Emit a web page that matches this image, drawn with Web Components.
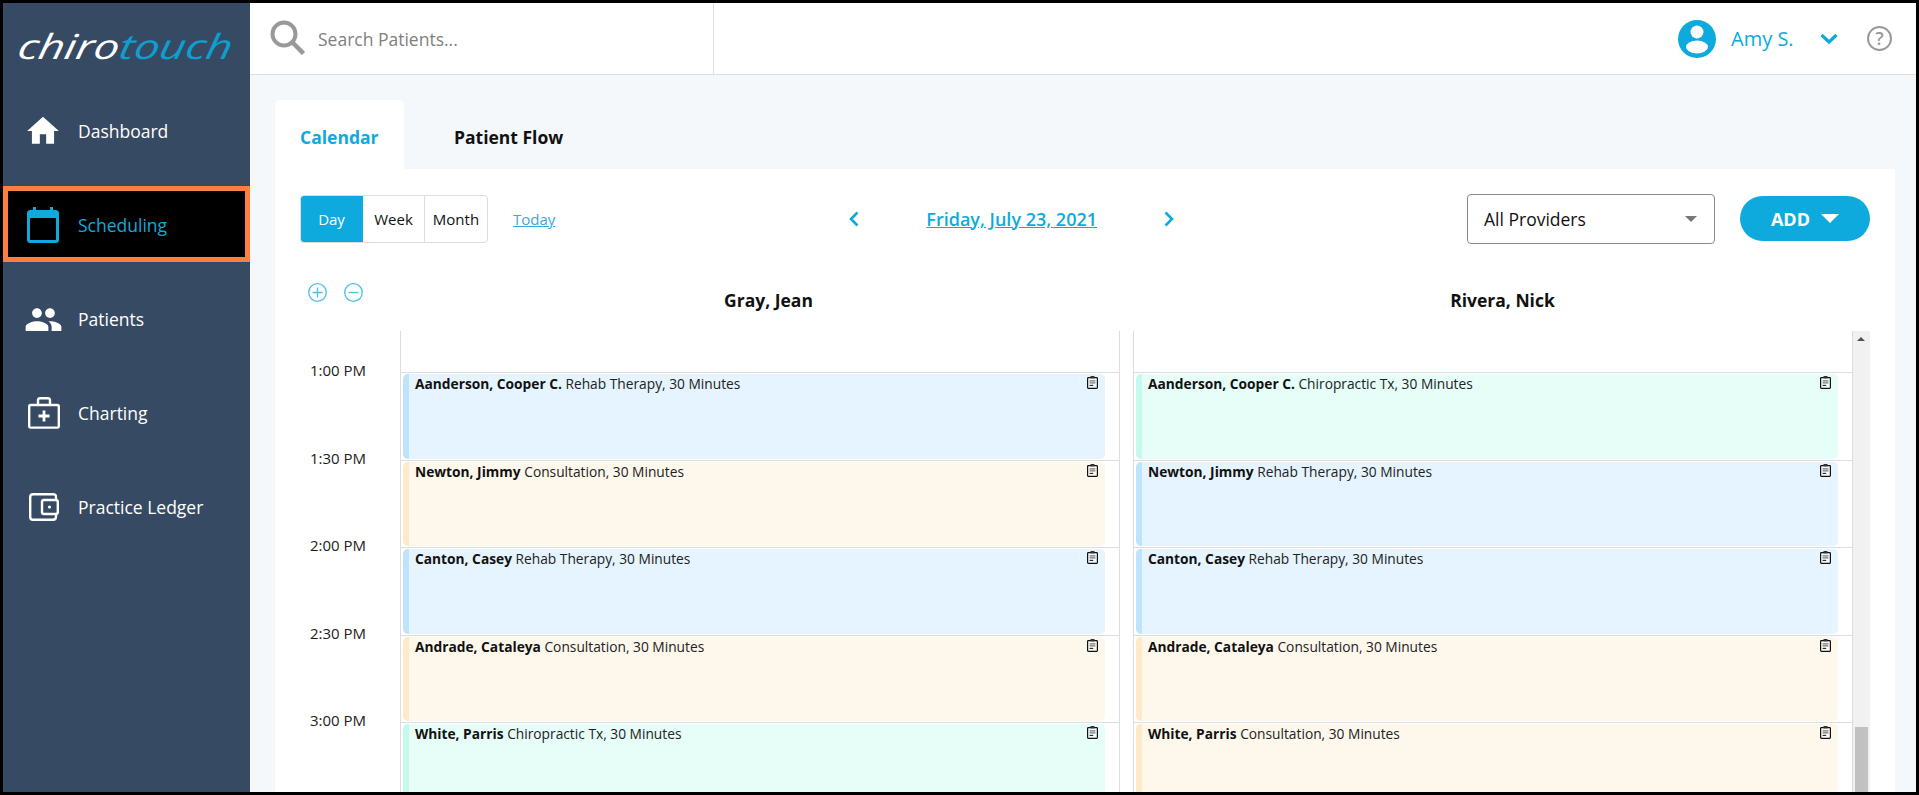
<!DOCTYPE html>
<html>
<head>
<meta charset="utf-8">
<title>ChiroTouch Scheduling</title>
<style>
  html, body { margin: 0; height: 100%; overflow: hidden; }
  body { font-family: "Open Sans", "Liberation Sans", sans-serif; color: #111; }
</style>
</head>
<body>

<app-shell>
  <side-nav slot="side">
    <nav-item>
      <svg slot="icon" width="38" height="38" viewBox="0 0 24 24" fill="#fff"><path d="M10 20v-6h4v6h5v-8h3L12 3 2 12h3v8z"/></svg>
      Dashboard
    </nav-item>
    <nav-item active>
      <svg slot="icon" width="32" height="36" viewBox="0 0 32 36"><rect x="1.5" y="4.5" width="29" height="30" rx="2" fill="none" stroke="#0eaadd" stroke-width="3"/><rect x="1" y="4" width="30" height="7" fill="#0eaadd"/><rect x="6" y="0" width="3" height="6" fill="#0eaadd"/><rect x="23" y="0" width="3" height="6" fill="#0eaadd"/></svg>
      Scheduling
    </nav-item>
    <nav-item>
      <svg slot="icon" style="margin-left:2px" width="39" height="39" viewBox="0 0 24 24" fill="#fff"><path d="M16 11c1.66 0 2.99-1.34 2.99-3S17.66 5 16 5c-1.66 0-3 1.34-3 3s1.34 3 3 3zm-8 0c1.66 0 2.99-1.34 2.99-3S9.66 5 8 5C6.34 5 5 6.34 5 8s1.34 3 3 3zm0 2c-2.33 0-7 1.17-7 3.5V19h14v-2.5c0-2.33-4.67-3.5-7-3.5zm8 0c-.29 0-.62.02-.97.05 1.16.84 1.97 1.97 1.97 3.45V19h6v-2.5c0-2.33-4.67-3.5-7-3.5z"/></svg>
      Patients
    </nav-item>
    <nav-item>
      <svg slot="icon" style="margin-left:2px" width="32" height="32" viewBox="0 0 32 32" fill="none" stroke="#fff" stroke-width="2.4"><rect x="1.2" y="8" width="29.6" height="22.6" rx="1.5"/><path d="M10 8V3.5C10 2.2 11 1.2 12 1.2h8c1 0 2 1 2 2.3V8"/><path d="M16 13.5v11M10.5 19h11" stroke-width="2.8"/></svg>
      Charting
    </nav-item>
    <nav-item>
      <svg slot="icon" style="margin-left:3px" width="30" height="28" viewBox="0 0 30 28" fill="none" stroke="#fff" stroke-width="2.4"><path d="M27 7V4.2C27 2.4 26 1.2 24 1.2H4C2.4 1.2 1.2 2.4 1.2 4v20c0 1.6 1.2 2.8 2.8 2.8h20c2 0 3-1.2 3-3V21"/><rect x="13" y="7" width="15.8" height="14" rx="2"/><circle cx="20.5" cy="14" r="1.6" fill="#fff" stroke="none"/></svg>
      Practice Ledger
    </nav-item>
  </side-nav>

  <top-bar slot="top"></top-bar>

  <tab-strip slot="main">
    <cal-toolbar></cal-toolbar>
    <cal-head></cal-head>
    <cal-grid>
      <cal-column>
        <cal-event kind="blue"><b>Aanderson, Cooper C.</b> Rehab Therapy, 30 Minutes</cal-event>
        <cal-event kind="orange"><b>Newton, Jimmy</b> Consultation, 30 Minutes</cal-event>
        <cal-event kind="blue"><b>Canton, Casey</b> Rehab Therapy, 30 Minutes</cal-event>
        <cal-event kind="orange"><b>Andrade, Cataleya</b> Consultation, 30 Minutes</cal-event>
        <cal-event kind="green"><b>White, Parris</b> Chiropractic Tx, 30 Minutes</cal-event>
      </cal-column>
      <cal-column second>
        <cal-event kind="green"><b>Aanderson, Cooper C.</b> Chiropractic Tx, 30 Minutes</cal-event>
        <cal-event kind="blue"><b>Newton, Jimmy</b> Rehab Therapy, 30 Minutes</cal-event>
        <cal-event kind="blue"><b>Canton, Casey</b> Rehab Therapy, 30 Minutes</cal-event>
        <cal-event kind="orange"><b>Andrade, Cataleya</b> Consultation, 30 Minutes</cal-event>
        <cal-event kind="orange"><b>White, Parris</b> Consultation, 30 Minutes</cal-event>
      </cal-column>
    </cal-grid>
  </tab-strip>
</app-shell>

<script>
const BLUE = '#0eaadd';

class AppShell extends HTMLElement {
  constructor() {
    super();
    this.attachShadow({mode: 'open'}).innerHTML = `
      <style>
        :host {
          display: grid;
          box-sizing: border-box;
          height: 100vh;
          border: 3px solid #000;
          grid-template-columns: 247px 1fr;
          grid-template-rows: 72px 1fr;
          background: #f4f8fb;
          overflow: hidden;
        }
        .side { grid-row: 1 / 3; min-height: 0; display: block; }
        .top { min-width: 0; }
        .main { min-width: 0; min-height: 0; overflow: hidden; }
      </style>
      <div class="side"><slot name="side"></slot></div>
      <div class="top"><slot name="top"></slot></div>
      <div class="main"><slot name="main"></slot></div>
    `;
  }
}

class SideNav extends HTMLElement {
  constructor() {
    super();
    this.attachShadow({mode: 'open'}).innerHTML = `
      <style>
        :host {
          display: flex;
          flex-direction: column;
          gap: 18px;
          box-sizing: border-box;
          height: 100%;
          background: #364b63;
        }
        .logo {
          height: 71px;
          padding: 19px 0 0 8px;
          box-sizing: border-box;
          font-size: 34.5px;
          line-height: 48px;
          font-style: italic;
          font-weight: 400;
          color: #fff;
          white-space: nowrap;
          transform: scaleX(1.31) skewX(-8deg);
          transform-origin: 0 100%;
        }
        .logo span { color: #0e9fd0; }
      </style>
      <div class="logo">chiro<span>touch</span></div>
      <slot></slot>
    `;
  }
}

class NavItem extends HTMLElement {
  constructor() {
    super();
    this.attachShadow({mode: 'open'}).innerHTML = `
      <style>
        :host {
          display: flex;
          align-items: center;
          box-sizing: border-box;
          height: 76px;
          padding-top: 2px;
          border: 5px solid transparent;
          color: #fff;
          font-size: 17.5px;
        }
        :host([active]) {
          background: #000;
          border-color: #ff7f41;
          color: ${BLUE};
        }
        .icon {
          width: 70px;
          flex: none;
          display: flex;
          justify-content: center;
          padding-right: 1px;
          box-sizing: border-box;
          height: 40px;
          align-items: center;
        }
      </style>
      <div class="icon"><slot name="icon"></slot></div>
      <slot></slot>
    `;
  }
}

class TopBar extends HTMLElement {
  constructor() {
    super();
    this.attachShadow({mode: 'open'}).innerHTML = `
      <style>
        :host {
          display: flex;
          align-items: center;
          box-sizing: border-box;
          height: 72px;
          background: #fff;
          border-bottom: 1px solid #dde1e5;
        }
        .search {
          display: flex;
          align-items: center;
          gap: 13px;
          box-sizing: border-box;
          width: 464px;
          height: 100%;
          padding-left: 20px;
          border-right: 1px solid #dde1e5;
          color: #808080;
          font-size: 17.5px;
        }
        .search svg { margin-top: -3px; }
        .user {
          margin-left: auto;
          display: flex;
          align-items: center;
          padding-right: 24px;
          color: ${BLUE};
          font-size: 20px;
        }
        .name { margin-left: 15px; width: 89px; }
        .help {
          width: 21px;
          height: 21px;
          margin-left: 29px;
          border: 2px solid #999;
          border-radius: 50%;
          color: #999;
          font-size: 18px;
          font-weight: 600;
          line-height: 21px;
          text-align: center;
        }
      </style>
      <div class="search">
        <svg width="35" height="35" viewBox="0 0 35 35" fill="none" stroke="#999"><circle cx="14" cy="14" r="11.5" stroke-width="4"/><path d="M22.5 22.5L33.5 33.5" stroke-width="4.5"/></svg>
        Search Patients...
      </div>
      <div class="user">
        <svg width="38" height="38" viewBox="0 0 38 38"><circle cx="19" cy="19" r="19" fill="${BLUE}"/><circle cx="19" cy="12" r="6.5" fill="#fff"/><ellipse cx="19" cy="27" rx="11" ry="6.5" fill="#fff"/></svg>
        <span class="name">Amy S.</span>
        <svg width="18" height="12" viewBox="0 0 18 12" fill="none" stroke="${BLUE}" stroke-width="3.2"><path d="M1.5 2L9 9l7.5-7"/></svg>
        <span class="help">?</span>
      </div>
    `;
  }
}

class TabStrip extends HTMLElement {
  constructor() {
    super();
    this.attachShadow({mode: 'open'}).innerHTML = `
      <style>
        :host {
          display: flex;
          flex-direction: column;
          box-sizing: border-box;
          height: 100%;
          padding: 25px 21px 0 25px;
          overflow: hidden;
        }
        .tabs { display: flex; height: 69px; flex: none; font-size: 17.5px; font-weight: 700; }
        .tab { display: flex; align-items: center; padding-top: 4px; box-sizing: border-box; }
        .active {
          width: 129px;
          padding-left: 25px;
          background: #fff;
          border-radius: 5px 5px 0 0;
          color: ${BLUE};
        }
        .other { margin-left: 50px; color: #111; }
        .card {
          flex: 1;
          min-height: 0;
          padding: 25px 25px 0;
          background: #fff;
          overflow: hidden;
        }
      </style>
      <div class="tabs">
        <div class="tab active">Calendar</div>
        <div class="tab other">Patient Flow</div>
      </div>
      <div class="card"><slot></slot></div>
    `;
  }
}

class CalToolbar extends HTMLElement {
  constructor() {
    super();
    this.attachShadow({mode: 'open'}).innerHTML = `
      <style>
        :host {
          display: flex;
          align-items: center;
          height: 49px;
          font-size: 15px;
        }
        .views {
          display: flex;
          height: 48px;
          box-sizing: border-box;
          border: 1px solid #ddd;
          border-radius: 4px;
          overflow: hidden;
        }
        .views div { display: flex; align-items: center; justify-content: center; }
        .day { width: 63px; margin: -1px 0 -1px -1px; background: ${BLUE}; color: #fff; }
        .week { width: 61px; border-right: 1px solid #ddd; }
        .month { width: 62px; }
        .today { margin-left: 25px; color: #3aa8de; text-decoration: underline; }
        .nav { display: flex; align-items: center; margin-left: 294px; }
        .date {
          margin: 0 67px 0 67px;
          color: ${BLUE};
          font-size: 18px;
          font-weight: 600;
          text-decoration: underline;
        }
        .select {
          display: flex;
          align-items: center;
          justify-content: space-between;
          box-sizing: border-box;
          width: 248px;
          height: 50px;
          margin-left: auto;
          padding: 0 17px 0 16px;
          border: 1px solid #8a8a8a;
          border-radius: 4px;
          font-size: 17.5px;
        }
        .caret { width: 0; height: 0; border: 6px solid transparent; border-top: 6px solid #777; border-bottom: 0; }
        .add {
          display: flex;
          align-items: center;
          justify-content: center;
          gap: 11px;
          width: 130px;
          height: 45px;
          margin-left: 25px;
          border-radius: 23px;
          background: ${BLUE};
          color: #fff;
          font-size: 18px;
          font-weight: 700;
        }
        .add i { width: 0; height: 0; border: 9px solid transparent; border-top: 9px solid #fff; border-bottom: 0; }
      </style>
      <div class="views">
        <div class="day">Day</div>
        <div class="week">Week</div>
        <div class="month">Month</div>
      </div>
      <span class="today">Today</span>
      <div class="nav">
        <svg width="10" height="16" viewBox="0 0 10 16" fill="none" stroke="${BLUE}" stroke-width="2.6"><path d="M8.5 1.5L2 8l6.5 6.5"/></svg>
        <span class="date">Friday, July 23, 2021</span>
        <svg width="10" height="16" viewBox="0 0 10 16" fill="none" stroke="${BLUE}" stroke-width="2.6"><path d="M1.5 1.5L8 8l-6.5 6.5"/></svg>
      </div>
      <div class="select">All Providers<span class="caret"></span></div>
      <div class="add">ADD<i></i></div>
    `;
  }
}

class CalHead extends HTMLElement {
  constructor() {
    super();
    this.attachShadow({mode: 'open'}).innerHTML = `
      <style>
        :host {
          display: grid;
          grid-template-columns: 100px 720px 13px 719px 18px;
          height: 88px;
          font-size: 17.5px;
          font-weight: 700;
        }
        .zoom { display: flex; gap: 17px; padding: 40px 0 0 8px; }
        .name { text-align: center; padding: 45px 0 0 17px; line-height: 24px; }
        .b { grid-column: 4; padding-left: 20px; }
      </style>
      <div class="zoom">
        <svg width="19" height="19" viewBox="0 0 19 19" fill="none" stroke="#4cbfe6" stroke-width="1.3"><circle cx="9.5" cy="9.5" r="8.8"/><path d="M9.5 4.5v10M4.5 9.5h10"/></svg>
        <svg width="19" height="19" viewBox="0 0 19 19" fill="none" stroke="#4cbfe6" stroke-width="1.3"><circle cx="9.5" cy="9.5" r="8.8"/><path d="M4.5 9.5h10"/></svg>
      </div>
      <div class="name">Gray, Jean</div>
      <div class="name b">Rivera, Nick</div>
    `;
  }
}

class CalGrid extends HTMLElement {
  constructor() {
    super();
    const times = ['1:00 PM', '1:30 PM', '2:00 PM', '2:30 PM', '3:00 PM'];
    this.attachShadow({mode: 'open'}).innerHTML = `
      <style>
        :host {
          display: grid;
          grid-template-columns: 100px 720px 13px 719px 18px;
          grid-template-rows: 461px;
          height: 461px;
          overflow: hidden;
        }
        .times { padding: 29px 24px 0 0; font-size: 15px; text-align: center; grid-column: 1; grid-row: 1; }
        .times div { height: 87.5px; line-height: 20px; color: #222; }
        ::slotted(cal-column:not([second])) { grid-column: 2; }
        ::slotted(cal-column[second]) { grid-column: 4; }
        .bar {
          grid-column: 5;
          grid-row: 1;
          display: flex;
          flex-direction: column;
          box-sizing: border-box;
          border-left: 1px solid #ddd;
          background: #f1f1f1;
        }
        .up {
          width: 0;
          height: 0;
          margin: 6px 0 0 4px;
          border: 4px solid transparent;
          border-bottom: 4px solid #505050;
          border-top: 0;
        }
        .thumb { margin: auto 2px 0; height: 65px; background: #c1c1c1; }
      </style>
      <div class="times">${times.map(t => `<div>${t}</div>`).join('')}</div>
      <slot></slot>
      <div class="bar"><div class="up"></div><div class="thumb"></div></div>
    `;
  }
}

class CalColumn extends HTMLElement {
  constructor() {
    super();
    this.attachShadow({mode: 'open'}).innerHTML = `
      <style>
        :host {
          display: block;
          grid-row: 1;
          box-sizing: border-box;
          padding-top: 41px;
          border-left: 1px solid #ddd;
          border-right: 1px solid #ddd;
          min-width: 0;
          overflow: hidden;
        }
        :host([second]) { border-right: 0; }
      </style>
      <slot></slot>
    `;
  }
}

class CalEvent extends HTMLElement {
  constructor() {
    super();
    const palette = {
      blue: ['#e5f4fe', '#bde3fd'],
      orange: ['#fef7ec', '#fee9c9'],
      green: ['#e6fdf8', '#c5f9ec']
    };
    const colour = palette[this.getAttribute('kind')];
    this.attachShadow({mode: 'open'}).innerHTML = `
      <style>
        :host {
          display: block;
          box-sizing: border-box;
          height: 87.5px;
          padding: 1px 14px 1px 2px;
          border-top: 1px solid #ddd;
        }
        .box {
          position: relative;
          box-sizing: border-box;
          height: 100%;
          padding: 0 24px 0 6px;
          background: ${colour[0]};
          border-left: 6px solid ${colour[1]};
          border-radius: 5px;
          font-size: 13.75px;
          line-height: 20px;
          color: #222;
          white-space: nowrap;
        }
        ::slotted(b) { font-weight: 700; color: #111; }
        svg { position: absolute; top: 2px; right: 7px; }
      </style>
      <div class="box">
        <slot></slot>
        <svg width="11" height="13" viewBox="0 0 11 13"><rect x="0.6" y="1.6" width="9.8" height="10.8" rx="0.8" fill="#fff" fill-opacity=".5" stroke="#111" stroke-width="1.2"/><rect x="3.5" y="0" width="4" height="2.4" fill="#333"/><path d="M2.6 4.8h5.8M2.6 6.8h5.8" stroke="#777" stroke-width="1.2"/><path d="M2.6 9.4h3.6" stroke="#222" stroke-width="1.1"/></svg>
      </div>
    `;
  }
}

customElements.define('app-shell', AppShell);
customElements.define('side-nav', SideNav);
customElements.define('nav-item', NavItem);
customElements.define('top-bar', TopBar);
customElements.define('tab-strip', TabStrip);
customElements.define('cal-toolbar', CalToolbar);
customElements.define('cal-head', CalHead);
customElements.define('cal-grid', CalGrid);
customElements.define('cal-column', CalColumn);
customElements.define('cal-event', CalEvent);
</script>
</body>
</html>
